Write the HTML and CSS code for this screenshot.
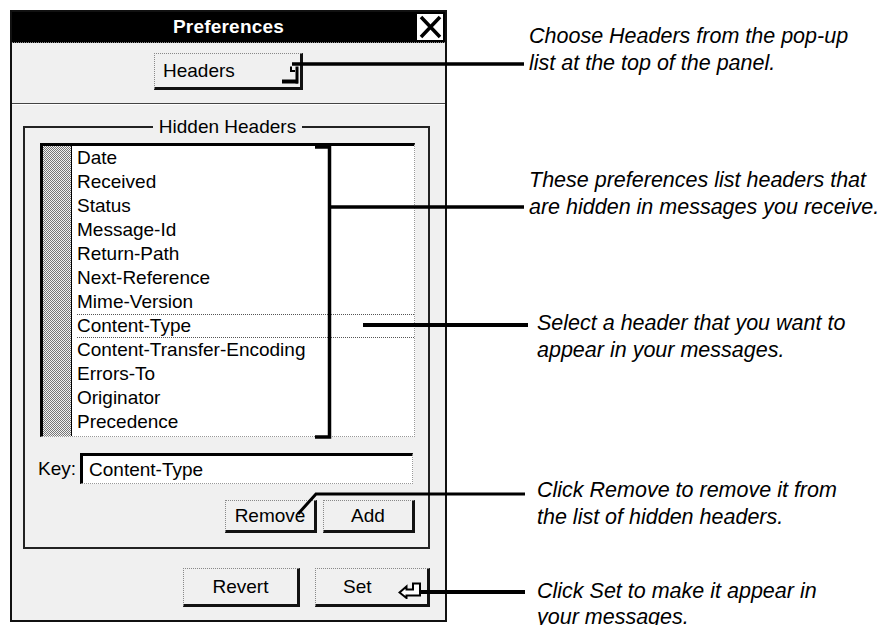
FILE: index.html
```html
<!DOCTYPE html>
<html>
<head>
<meta charset="utf-8">
<title>Preferences</title>
<link rel="stylesheet" href="styles.css">
</head>
<body>
<div class="page">
  <div class="window">
    <div class="titlebar">
      <span class="title">Preferences</span>
      <span class="close">
        <svg width="25" height="26" viewBox="0 0 25 26"><path d="M3 3 L22 23 M22 3 L3 23" stroke="#000" stroke-width="3.5" fill="none"/></svg>
      </span>
    </div>
    <div class="popup-area">
      <div class="popup">
        <span>Headers</span>
        <svg class="popup-icon" width="18" height="22" viewBox="0 0 18 22"><path d="M0 19.5 H16" stroke="#000" stroke-width="4" fill="none"/><path d="M15 4.5 V21.5" stroke="#000" stroke-width="3" fill="none"/><path d="M9 4.5 V9 H13" stroke="#000" stroke-width="2" fill="none"/></svg>
      </div>
    </div>
    <div class="separator"></div>
    <fieldset class="group">
      <legend>Hidden Headers</legend>
      <div class="list">
        <div class="stripe"></div>
        <ul class="rows">
          <li>Date</li>
          <li>Received</li>
          <li>Status</li>
          <li>Message-Id</li>
          <li>Return-Path</li>
          <li>Next-Reference</li>
          <li>Mime-Version</li>
          <li class="sel">Content-Type</li>
          <li>Content-Transfer-Encoding</li>
          <li>Errors-To</li>
          <li>Originator</li>
          <li>Precedence</li>
        </ul>
      </div>
      <div class="key-row">
        <span class="key-label">Key:</span>
        <div class="field">Content-Type</div>
      </div>
      <div class="btn-row">
        <div class="btn small">Remove</div>
        <div class="btn small">Add</div>
      </div>
    </fieldset>
    <div class="bottom-row">
      <div class="btn big revert">Revert</div>
      <div class="btn big set">
        <span>Set</span>
        <svg class="return-icon" width="25" height="17" viewBox="0 0 25 17"><path d="M1.5 10.5 L8.5 4.5 V7.5 H15 V1.5 H22 V13.5 H8.5 V16 Z" stroke="#000" stroke-width="2" fill="#fff" stroke-linejoin="miter"/></svg>
      </div>
    </div>
  </div>

  <div class="notes">
    <p class="note n1">Choose Headers from the pop-up<br>list at the top of the panel.</p>
    <p class="note n2">These preferences list headers that<br>are hidden in messages you receive.</p>
    <p class="note n3">Select a header that you want to<br>appear in your messages.</p>
    <p class="note n4">Click Remove to remove it from<br>the list of hidden headers.</p>
    <p class="note n5">Click Set to make it appear in<br>your messages.</p>
  </div>

  <svg class="leaders" width="891" height="625" viewBox="0 0 891 625">
    <g stroke="#000" fill="none">
      <path d="M292 64 H524" stroke-width="3.5"/>
      <path d="M315 147 H329.5 V437 H315" stroke-width="3.5"/>
      <path d="M329 207 H524" stroke-width="3.5"/>
      <path d="M363 325 H528" stroke-width="4"/>
      <path d="M298 514 L316 494 H525" stroke-width="3"/>
      <path d="M420 592 H525" stroke-width="4"/>
    </g>
  </svg>
</div>
</body>
</html>
```

FILE: styles.css
```css
* {
  box-sizing: border-box;
}

html,
body {
  margin: 0;
  padding: 0;
  background: #fff;
}

body {
  width: 891px;
  height: 625px;
  overflow: hidden;
  font-family: "Liberation Sans", Arial, sans-serif;
  color: #000;
}

.page {
  position: relative;
  display: flex;
  align-items: flex-start;
  width: 891px;
  height: 625px;
}

/* ---------- window ---------- */
.window {
  margin: 10px 0 0 10px;
  width: 437px;
  height: 612px;
  flex: none;
  border: 2px solid #111;
  background: #f0f0f0;
  display: flex;
  flex-direction: column;
  font-size: 19px;
}

.titlebar {
  height: 31px;
  flex: none;
  background: #000;
  display: grid;
  grid-template-columns: 1fr auto 1fr;
  align-items: center;
  border-bottom: 1px dotted #888;
}

.title {
  grid-column: 2;
  color: #fff;
  font-weight: bold;
  font-size: 19px;
  letter-spacing: 0.2px;
}

.close {
  grid-column: 3;
  justify-self: end;
  width: 28px;
  height: 28px;
  margin-right: 1px;
  background: #fff;
  border: 1px solid #000;
  display: flex;
  align-items: center;
  justify-content: center;
}

.popup-area {
  height: 60px;
  flex: none;
  display: flex;
  justify-content: center;
  padding-top: 10px;
}

.popup {
  width: 149px;
  height: 37px;
  display: flex;
  align-items: center;
  justify-content: space-between;
  padding: 0 0 0 8px;
  border-top: 1px dotted #888;
  border-left: 1px dotted #888;
  border-right: 3px solid #111;
  border-bottom: 3px solid #111;
}

.popup-icon {
  margin-top: 4px;
}

.separator {
  height: 2px;
  flex: none;
  border-top: 1px solid #444;
  border-bottom: 1px solid #fff;
}

/* ---------- group box ---------- */
.group {
  margin: 11px 15px 0 11px;
  padding: 5px 13px 14px 15px;
  border: 2px solid #222;
  min-width: 0;
}

.group legend {
  margin: 0 auto;
  padding: 0 6px;
  font-size: 19px;
  line-height: 22px;
}

.list {
  height: 294px;
  display: flex;
  background: #fff;
  border-top: 3px solid #000;
  border-left: 3px solid #000;
  border-right: 1px dotted #999;
  border-bottom: 1px dotted #999;
}

.stripe {
  width: 29px;
  flex: none;
  background: repeating-conic-gradient(#777 0 25%, #f2f2f2 0 50%) 0 0 / 2px 2px;
  border-right: 1px solid #000;
}

.rows {
  list-style: none;
  margin: 0;
  padding: 0 0 0 5px;
  flex: 1;
}

.rows li {
  height: 24px;
  line-height: 24px;
  white-space: nowrap;
}

.rows li.sel {
  border-top: 1px dotted #555;
  border-bottom: 1px dotted #555;
  line-height: 22px;
}

.key-row {
  display: flex;
  align-items: center;
  height: 31px;
  margin-top: 16px;
  gap: 4px;
}

.key-label {
  margin-left: -2px;
}

.field {
  flex: 1;
  height: 31px;
  margin-right: 2px;
  background: #fff;
  border-top: 3px solid #000;
  border-left: 3px solid #000;
  border-right: 1px dotted #999;
  border-bottom: 1px dotted #999;
  padding-left: 6px;
  line-height: 27px;
}

/* ---------- buttons ---------- */
.btn {
  display: flex;
  align-items: center;
  justify-content: center;
  border-top: 1px dotted #888;
  border-left: 1px dotted #888;
  border-right: 3px solid #111;
  border-bottom: 3px solid #111;
}

.btn-row {
  display: flex;
  justify-content: flex-end;
  gap: 6px;
  margin-top: 16px;
}

.btn.small {
  width: 92px;
  height: 33px;
}

.bottom-row {
  display: flex;
  justify-content: flex-end;
  gap: 15px;
  margin: 19px 15px 0 0;
}

.btn.big {
  height: 39px;
}

.revert {
  width: 117px;
}

.set {
  width: 115px;
  justify-content: flex-start;
  padding-left: 27px;
  gap: 26px;
}

.return-icon {
  margin-top: 8px;
}

/* ---------- annotations ---------- */
.notes {
  margin-left: 82px;
  font-style: italic;
  font-size: 21.5px;
  line-height: 27px;
  white-space: nowrap;
}

.note {
  margin: 0;
}

.n1 { margin-top: 23px; }
.n2 { margin-top: 90px; }
.n3 { margin-top: 89px; margin-left: 8px; }
.n4 { margin-top: 113px; margin-left: 8px; }
.n5 { margin-top: 47px; margin-left: 8px; line-height: 26px; }

.leaders {
  position: absolute;
  left: 0;
  top: 0;
  pointer-events: none;
}
```
